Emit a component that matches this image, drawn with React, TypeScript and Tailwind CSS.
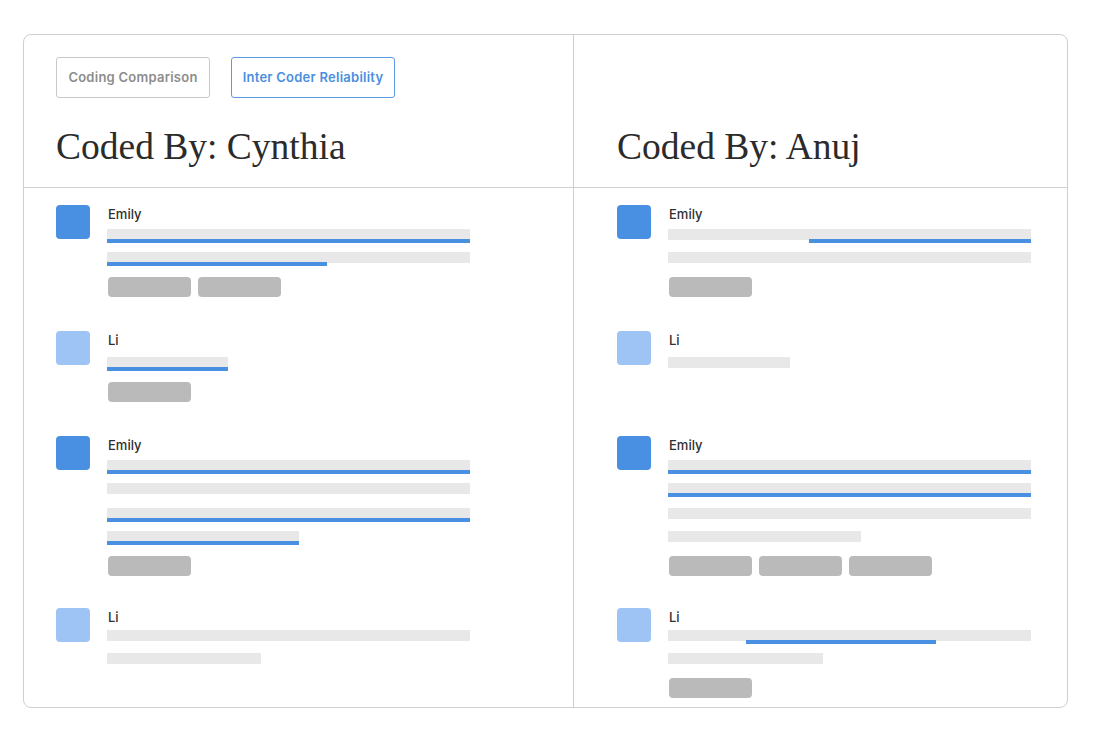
type Line = { w: number; hl?: [number, number]; para?: boolean }
type Entry = { lines: Line[]; tags: number }
type Row = { name: string; tone: "dark" | "light"; lead: number; pb: number; left: Entry; right: Entry }

const FULL = 363

const rows: Row[] = [
  {
    name: "Emily",
    tone: "dark",
    lead: 24,
    pb: 34,
    left: { lines: [{ w: FULL, hl: [0, FULL] }, { w: FULL, hl: [0, 220] }], tags: 2 },
    right: { lines: [{ w: FULL, hl: [141, FULL] }, { w: FULL }], tags: 1 },
  },
  {
    name: "Li",
    tone: "light",
    lead: 26,
    pb: 34,
    left: { lines: [{ w: 121, hl: [0, 121] }], tags: 1 },
    right: { lines: [{ w: 122 }], tags: 0 },
  },
  {
    name: "Emily",
    tone: "dark",
    lead: 24,
    pb: 32,
    left: {
      lines: [{ w: FULL, hl: [0, FULL] }, { w: FULL }, { w: FULL, hl: [0, FULL], para: true }, { w: 192, hl: [0, 192] }],
      tags: 1,
    },
    right: {
      lines: [{ w: FULL, hl: [0, FULL] }, { w: FULL, hl: [0, FULL] }, { w: FULL, para: true }, { w: 193 }],
      tags: 3,
    },
  },
  {
    name: "Li",
    tone: "light",
    lead: 22,
    pb: 9,
    left: { lines: [{ w: FULL }, { w: 154 }], tags: 0 },
    right: { lines: [{ w: FULL, hl: [78, 268] }, { w: 155 }], tags: 1 },
  },
]

function Bar({ line, first, lead }: { line: Line; first: boolean; lead: number }) {
  const mt = first ? lead - 18 : line.para ? 11 : 9
  return (
    <div style={{ marginTop: mt }}>
      <div className="h-[11px] bg-[#e8e8e8]" style={{ width: line.w }} />
      <div className="h-[4px] -mt-px">
        {line.hl && (
          <div
            className="h-full bg-[#4a90e2]"
            style={{ marginLeft: line.hl[0], width: line.hl[1] - line.hl[0] }}
          />
        )}
      </div>
    </div>
  )
}

function Cell({ row, entry, side, first }: { row: Row; entry: Entry; side: "l" | "r"; first: boolean }) {
  return (
    <div
      className={
        "flex gap-[17px] " +
        (side === "l" ? "pl-[32px] border-r border-[#cfcfcf]" : "pl-[43px]") +
        (first ? " pt-[17px]" : "")
      }
      style={{ paddingBottom: row.pb }}
    >
      <div
        className={
          "h-[34px] w-[34px] shrink-0 rounded-[4px] " +
          (row.tone === "dark" ? "bg-[#4a90e2]" : "bg-[#9ec3f5]")
        }
      />
      <div className="flex flex-col">
        <p className="h-[18px] pl-px text-[13px] leading-[18px] font-medium text-[#2f2f2f]">{row.name}</p>
        {entry.lines.map((l, i) => (
          <Bar key={i} line={l} first={i === 0} lead={row.lead} />
        ))}
        {entry.tags > 0 && (
          <div className="flex gap-[7px] mt-[11px] ml-px">
            {Array.from({ length: entry.tags }).map((_, i) => (
              <div key={i} className="h-[20px] w-[83px] rounded-[4px] bg-[#bababa]" />
            ))}
          </div>
        )}
      </div>
    </div>
  )
}

export default function App() {
  return (
    <div className="min-h-screen bg-white pt-[34px] pl-[23px] font-['Inter',sans-serif]">
      <div className="w-[1045px] rounded-lg border border-[#cfcfcf] overflow-hidden">
        <div className="grid grid-cols-[550px_1fr]">
          <div className="flex flex-col pl-[32px] pt-[22px] pb-[21px] border-r border-b border-[#cfcfcf]">
            <div className="flex gap-[21px]">
              <button className="h-[41px] w-[154px] rounded-[3px] border border-[#c9c9c9] text-[13px] tracking-[0.25px] font-semibold text-[#8c8c8c]">
                Coding Comparison
              </button>
              <button className="h-[41px] w-[164px] rounded-[3px] border border-[#5b9be3] text-[13px] tracking-[0.25px] font-semibold text-[#4a8fe0]">
                Inter Coder Reliability
              </button>
            </div>
            <h1 className="mt-[30px] text-[37.5px] leading-[38px] text-[#2b2b2b] font-['Liberation_Serif',serif]">
              Coded By: Cynthia
            </h1>
          </div>
          <div className="flex flex-col justify-end pl-[43px] pb-[21px] border-b border-[#cfcfcf]">
            <h1 className="text-[37.5px] leading-[38px] text-[#2b2b2b] font-['Liberation_Serif',serif]">
              Coded By: Anuj
            </h1>
          </div>
          {rows.map((r, i) => (
            <div key={i} className="contents">
              <Cell row={r} entry={r.left} side="l" first={i === 0} />
              <Cell row={r} entry={r.right} side="r" first={i === 0} />
            </div>
          ))}
        </div>
      </div>
    </div>
  )
}
